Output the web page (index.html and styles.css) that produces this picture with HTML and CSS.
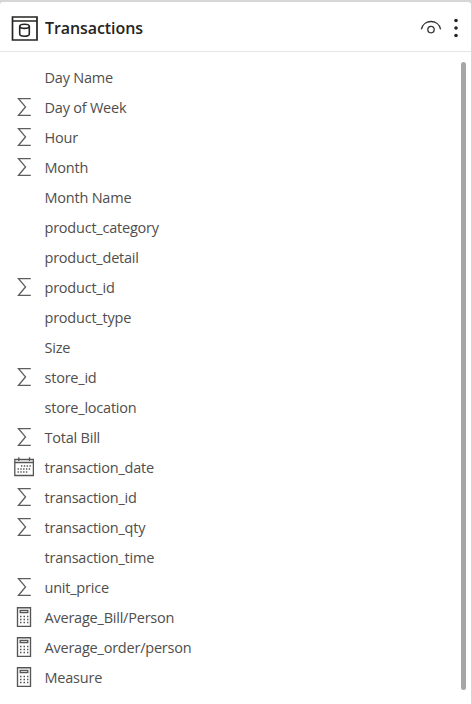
FILE: index.html
```
<!DOCTYPE html>
<html lang="en">
<head>
<meta charset="utf-8">
<title>Transactions</title>
<link rel="stylesheet" href="styles.css">
</head>
<body>
<svg class="defs" aria-hidden="true">
  <symbol id="sum" viewBox="0 0 20 20"><path d="M16.8 1.6H4.5L11.5 9.9L4.5 18.4H16.8" fill="none" stroke="#605e5c" stroke-width="1.35"/></symbol>
  <symbol id="cal" viewBox="0 0 20 20"><path d="M.8 2.5H19.4V18.5H.8ZM.8 5.5H19.4M4.8 .3V4M15.5 .3V4" fill="none" stroke="#555" stroke-width="1.3"/><path d="M7 9H17M3.5 12H17M3.5 15H14" fill="none" stroke="#555" stroke-width="1.4" stroke-dasharray="1.4 1.4"/></symbol>
  <symbol id="calc" viewBox="0 0 20 20"><path d="M3.5 .7H16.5V19.3H3.5ZM6.2 3.5H13.8V5.6H6.2Z" fill="none" stroke="#555" stroke-width="1.35"/><path d="M6 9.5H14.4M6 12.5H14.4M6 15.5H14.4" fill="none" stroke="#555" stroke-width="1.3" stroke-dasharray="1.5 2"/></symbol>
</svg>
<main class="panel">
  <header class="header">
    <svg class="table-icon" viewBox="0 0 27 25"><path d="M1.5 1H26V24H1.5ZM1.5 5H26" fill="none" stroke="#252423" stroke-width="1.7"/><path d="M8.7 10.3V18C8.7 21 18.3 21 18.3 18V10.3" fill="none" stroke="#252423" stroke-width="1.6"/><ellipse cx="13.5" cy="10.3" rx="4.8" ry="2.1" fill="none" stroke="#252423" stroke-width="1.6"/></svg>
    <h1 class="title">Transactions</h1>
    <svg class="eye" viewBox="0 0 22 16"><path d="M1.4 9.3C3.4-1.1 18.6-1.1 20.6 9.3" fill="none" stroke="#333" stroke-width="1.3"/><circle cx="11" cy="9.6" r="3.2" fill="none" stroke="#333" stroke-width="1.3"/></svg>
    <svg class="more" viewBox="0 0 4 20"><circle cx="2" cy="2.5" r="1.8"/><circle cx="2" cy="10" r="1.8"/><circle cx="2" cy="17.5" r="1.8"/></svg>
  </header>
  <div class="body">
    <ul class="fields">
      <li class="field"><span class="icon"></span><span>Day Name</span></li>
      <li class="field"><svg class="icon"><use href="#sum"/></svg><span>Day of Week</span></li>
      <li class="field"><svg class="icon"><use href="#sum"/></svg><span>Hour</span></li>
      <li class="field"><svg class="icon"><use href="#sum"/></svg><span>Month</span></li>
      <li class="field"><span class="icon"></span><span>Month Name</span></li>
      <li class="field"><span class="icon"></span><span>product_category</span></li>
      <li class="field"><span class="icon"></span><span>product_detail</span></li>
      <li class="field"><svg class="icon"><use href="#sum"/></svg><span>product_id</span></li>
      <li class="field"><span class="icon"></span><span>product_type</span></li>
      <li class="field"><span class="icon"></span><span>Size</span></li>
      <li class="field"><svg class="icon"><use href="#sum"/></svg><span>store_id</span></li>
      <li class="field"><span class="icon"></span><span>store_location</span></li>
      <li class="field"><svg class="icon"><use href="#sum"/></svg><span>Total Bill</span></li>
      <li class="field"><svg class="icon"><use href="#cal"/></svg><span>transaction_date</span></li>
      <li class="field"><svg class="icon"><use href="#sum"/></svg><span>transaction_id</span></li>
      <li class="field"><svg class="icon"><use href="#sum"/></svg><span>transaction_qty</span></li>
      <li class="field"><span class="icon"></span><span>transaction_time</span></li>
      <li class="field"><svg class="icon"><use href="#sum"/></svg><span>unit_price</span></li>
      <li class="field"><svg class="icon"><use href="#calc"/></svg><span>Average_Bill/Person</span></li>
      <li class="field"><svg class="icon"><use href="#calc"/></svg><span>Average_order/person</span></li>
      <li class="field"><svg class="icon"><use href="#calc"/></svg><span>Measure</span></li>
    </ul>
    <div class="scrollbar"></div>
  </div>
</main>
</body>
</html>
```
FILE: styles.css
```
* { box-sizing: border-box; }
body {
  margin: 0;
  height: 704px;
  overflow: hidden;
  background: #d6d6d6;
  font-family: "Open Sans", "Noto Sans", sans-serif;
}
.defs { display: none; }
.panel {
  height: 704px;
  width: 471px;
  border-top: 2px solid #d6d6d6;
  background: #d6d6d6;
}
.header {
  display: flex;
  align-items: center;
  height: 50px;
  padding: 0 13px 0 11px;
  border-bottom: 1px solid #e6e6e6;
  border-radius: 3px 3px 0 0;
  background: #fff;
}
.table-icon { width: 27px; height: 25px; margin-top: 3px; }
.title {
  flex: 1;
  margin: 2px 0 0 7px;
  font-size: 16px;
  font-weight: 600;
  line-height: 24px;
  letter-spacing: -0.08px;
  color: #252423;
}
.eye { width: 22px; height: 16px; margin-top: 2px; }
.more { width: 4px; height: 20px; margin: 3px 0 0 12px; fill: #252423; }
.body {
  display: flex;
  justify-content: space-between;
  height: 652px;
  padding: 10px 5px 0 14px;
  background: #fff;
}
.fields { margin: 0; padding: 1px 0 0; list-style: none; }
.field {
  display: flex;
  align-items: center;
  gap: 10.5px;
  height: 30px;
  font-size: 14.5px;
  line-height: 20px;
  letter-spacing: -0.22px;
  white-space: nowrap;
  color: #504e4c;
}
.icon { width: 20px; height: 20px; flex: none; margin-bottom: 2px; }
.scrollbar { width: 5px; height: 628px; border-radius: 3px; background: #a6a6a6; }
```
